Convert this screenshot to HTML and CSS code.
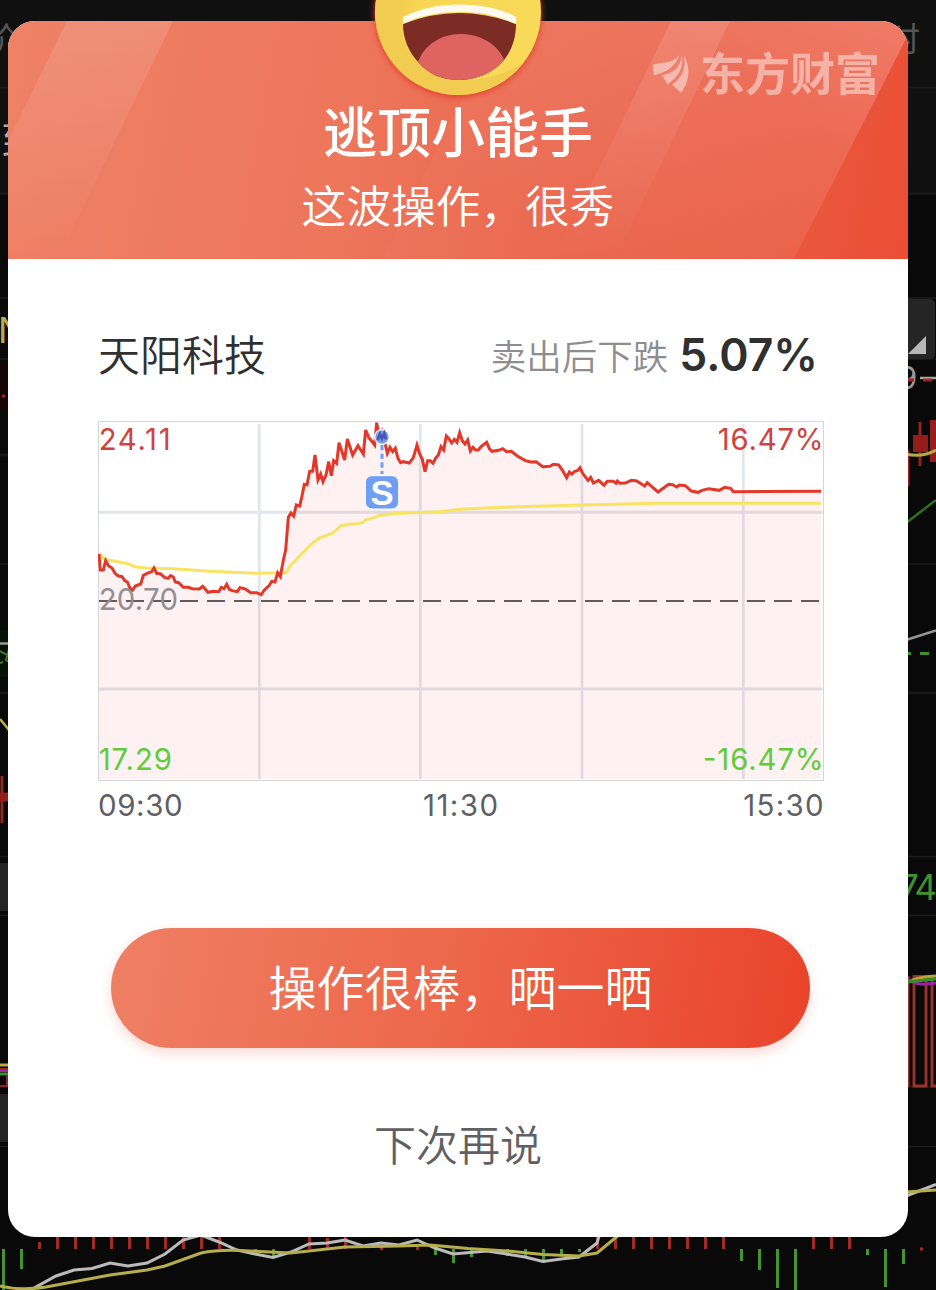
FILE: index.html
```html
<!DOCTYPE html>
<html lang="zh-CN">
<head>
<meta charset="utf-8">
<title>逃顶小能手</title>
<link rel="stylesheet" href="styles.css">
</head>
<body>
<svg class="backdrop" viewBox="0 0 936 1290" aria-hidden="true">
  <rect width="936" height="1290" fill="#090909"/>
  <rect width="936" height="193" fill="#101010"/>
  <g stroke="#1c1c1c" stroke-width="1.5">
    <path d="M0 87.500H936M0 298H936M0 359H936M0 564H936M0 856.500H936M0 915.500H936M0 1087H936M0 1146.500H936"/>
    <path d="M0 193.500H936M0 455H936M0 693H936" stroke-width="3" stroke="#171717"/>
  </g>
  <g class="backdrop-cjk">
    <text x="-14" y="51" font-size="33" fill="#555">价</text>
    <text x="887" y="51" font-size="33" fill="#555">时</text>
    <text x="1" y="154" font-size="38" fill="#aaa">到</text>
  </g>
  <rect x="0" y="363" width="9" height="47" fill="#160304"/>
  <circle cx="3.500" cy="396" r="1.700" fill="#a02622"/>
  <text x="-2" y="343" class="digits" font-size="35" fill="#b5ad4b">N</text>
  <rect x="0" y="630" width="9" height="47" fill="#071207"/>
  <path d="M0 643.500H9" stroke="#999" stroke-width="2.500"/>
  <path d="M0 651L9 656M0 663L3 662M9 649L6 660L9 662" stroke="#398025" stroke-width="2" fill="none"/>
  <path d="M0 719L9 730" stroke="#bbb04a" stroke-width="2.500"/>
  <path d="M2 776V823" stroke="#8b2621" stroke-width="3"/>
  <path d="M0 797H9" stroke="#951d19" stroke-width="9"/>
  <path d="M0 863H9V911H0ZM0 1094H9V1142H0Z" fill="#242424"/>
  <g stroke-width="3">
    <path d="M0 1065H9" stroke="#b5aa48"/>
    <path d="M0 1069H9" stroke="#9b2825" stroke-width="2"/>
    <path d="M0 1071H9" stroke="#a124a2" stroke-width="2"/>
    <path d="M0 1074H9" stroke="#438d2c"/>
    <path d="M7 1075V1086H0" stroke="#8b2723" fill="none" stroke-width="2"/>
  </g>
  <rect x="885" y="299" width="50" height="60" rx="5" fill="#252525"/>
  <path d="M908 354L926 336V354Z" fill="#b8b8b8"/>
  <text x="898" y="389" class="digits" font-size="31" fill="#999">9</text>
  <path d="M920 378H936" stroke="#aaa" stroke-width="2.500"/>
  <path d="M908 380H914M923 380H932" stroke="#a52321" stroke-width="3"/>
  <path d="M908 450V486M920 422V466" stroke="#902320" stroke-width="3"/>
  <path d="M913 435H928V452H913ZM930 420H936V462H930Z" fill="#951d19"/>
  <path d="M906 454Q922 458 936 450" stroke="#b9aa48" stroke-width="3" fill="none"/>
  <path d="M906 523L936 500" stroke="#31701f" stroke-width="2.500"/>
  <path d="M906 640L936 630.500" stroke="#949494" stroke-width="2.500"/>
  <path d="M906 653.500H911M920 653.500H929" stroke="#438f2b" stroke-width="3"/>
  <text x="899" y="900" class="digits" font-size="35" fill="#429130" textLength="38">74</text>
  <g fill="none" stroke="#98302c" stroke-width="3">
    <path d="M908 976V1087M914 976.500H926V1086H914ZM932 976V1086H936"/>
    <path d="M906 983Q916 977 936 976" stroke="#b5a63b"/>
    <path d="M906 977Q914 987 936 983" stroke="#9d20aa"/>
    <path d="M906 982L936 979" stroke="#359126"/>
  </g>
  <path d="M39.500 1242V1249" stroke="#a22b27" stroke-width="3"/>
  <path d="M57.500 1236V1249M75.500 1236V1249M93.500 1236V1249M111.500 1236V1249M129.500 1236V1249M147.500 1236V1249M165.500 1236V1249M183.500 1236V1249M201.500 1236V1249M219.500 1236V1249M309.500 1236V1249M327.500 1238V1249M345.500 1236V1249M381.500 1245V1250M417.500 1244V1250M597.500 1236V1249M615.500 1236V1249M633.500 1236V1249M651.500 1236V1249M669.500 1236V1249M687.500 1236V1249M705.500 1236V1249M723.500 1236V1249M813.500 1236V1249M831.500 1236V1249M849.500 1236V1249M920 1249H923" stroke="#a22b27" stroke-width="3"/>
  <path d="M3.500 1249V1290M21.500 1249V1269M255.500 1249V1252M273.500 1249V1256M435.500 1249V1255M453.500 1249V1263M471.500 1249V1257M507.500 1249V1256M525.500 1249V1256M543.500 1249V1263M561.500 1249V1255M579.500 1249V1252M741.500 1249V1261M759.500 1249V1270M777.500 1249V1288M795.500 1249V1290M867.500 1249V1255M885.500 1249V1287M903.500 1249V1264" stroke="#459430" stroke-width="3"/>
  <g fill="none" stroke-width="3">
    <path d="M34 1288L56 1276L74 1270L92 1268.500L110 1263L128 1266L147 1263L165 1254L183 1240L201 1235L219 1242L237 1250L255 1254L273 1257.500L291 1252L309 1244L327 1243L345 1240L363 1246L381 1243L399 1245L417 1240L435 1248L453 1254L487 1251L507 1254L525 1257L543 1261.500L561 1259L579 1257L597 1243L600 1233M906 1196L936 1184.500" stroke="#bbb"/>
    <path d="M0 1286Q20 1291 46 1287L110 1275L147 1270L165 1266L201 1253Q220 1249 250 1251L291 1253L345 1247L399 1246L430 1245L468 1248.500L507 1251L543 1254.500L579 1256L597 1253L620 1234M906 1192L936 1190" stroke="#b6ae4d"/>
  </g>
</svg>

<main class="dialog">
  <header class="banner">
    <svg class="banner-art" viewBox="0 0 900 238" aria-hidden="true">
      <defs>
        <linearGradient id="beam" x1="0" y1="0" x2="0" y2="1">
          <stop offset="0" stop-color="#fff" stop-opacity=".13"/>
          <stop offset="1" stop-color="#fff" stop-opacity="0"/>
        </linearGradient>
        <linearGradient id="wide" gradientUnits="userSpaceOnUse" x1="880" y1="0" x2="640" y2="300">
          <stop offset="0" stop-color="#fff" stop-opacity=".23"/>
          <stop offset=".35" stop-color="#fff" stop-opacity=".12"/>
          <stop offset="1" stop-color="#fff" stop-opacity=".02"/>
        </linearGradient>
      </defs>
      <path d="M59 0H165L50 238H0V120Z" fill="url(#beam)"/>
      <path d="M493 0H893L900 14L786 238H374Z" fill="url(#wide)"/>
      <path d="M663 0H722L607 238H547Z" fill="url(#beam)"/>
    </svg>
    <svg class="emoji" viewBox="0 0 186 112" aria-hidden="true">
      <defs>
        <linearGradient id="face" x1="0" x2="1">
          <stop offset=".1" stop-color="#f2c84d"/>
          <stop offset=".25" stop-color="#f7d653"/>
          <stop offset="1" stop-color="#f9da59"/>
        </linearGradient>
      </defs>
      <circle class="face" cx="93" cy="12" r="83" fill="url(#face)"/>
      <path d="M10 12A83 83 0 0 0 158 63Q132 80 98 80C59 80 31 53 30 0H11Z" fill="#f2cc50"/>
      <path d="M38 24Q94 2 151 24C151 38 147 50 139 60C127 74 110 80 94 80C79 80 64 75 53 62C43 51 38 38 38 24Z" fill="#7c2b25"/>
      <path d="M53 62C59 45 76 34 95 34C115 34 133 44 139 60C127 74 110 80 94 80C79 80 64 75 53 62Z" fill="#df6461"/>
      <path d="M38 17C56 8 75 4.500 94 4.500C114 4.500 135 8 151 17V24C132 15 114 12 94 12C75 12 56 15 38 24Z" fill="#fffaf0"/>
    </svg>
    <div class="brand">
      <svg class="brand-mark" viewBox="0 0 112 120" aria-hidden="true">
        <path d="M80 2C66 26 34 24 0 32L2 64C40 56 68 38 80 2Z"/>
        <path d="M87 4C82 44 62 56 28 64L44 92C76 68 94 44 87 4Z"/>
        <path d="M93 4C102 46 84 74 58 92L84 117C112 84 114 36 93 4Z"/>
      </svg>
      <span class="brand-name">东方财富</span>
    </div>
    <h1 class="title">逃顶小能手</h1>
    <p class="subtitle">这波操作，很秀</p>
  </header>

  <section class="stock">
    <div class="stock-head">
      <h2 class="stock-name">天阳科技</h2>
      <p class="change"><span class="change-label">卖出后下跌</span><strong class="change-value">5.07%</strong></p>
    </div>
    <svg class="chart" viewBox="24 33 2178 1080">
      <g fill="none" stroke="#e3e5ec">
        <path d="M24 307H2200M24 837H2200" stroke-width="9"/>
        <path d="M508 42V1107M991 42V1107M1476 42V1107M1960 42V1107" stroke-width="8"/>
      </g>
      <rect x="25.500" y="34.500" width="2175" height="1077" fill="none" stroke="#d2d6da" stroke-width="3"/>
      <path id="area" fill="#e03030" fill-opacity=".065"/>
      <path d="M27 573H2195" stroke="#625a5b" stroke-width="6" stroke-dasharray="54 27"/>
      <path class="average" d="M27 430L42 446L60 451L114 461L135 470L165 474L250 476L360 484L500 490L588 488L602 466L620 448L636 430L648 420L658 408L672 396L690 383L725 371L739 360L752 348L775 343L800 341L818 338L828 329L847 325L865 317L900 312L950 309L1050 305L1120 297L1260 291L1450 286L1700 280H2193"/>
      <path id="price" class="price"/>
      <g class="digits chart-values">
        <text x="26" y="120" textLength="216" fill="#cf423e">24.11</text>
        <text x="26" y="600" textLength="238" fill="#929094">20.70</text>
        <text x="26" y="1080" textLength="220" fill="#60cb3b">17.29</text>
        <text x="1883" y="120" textLength="318" fill="#cf423e">16.47%</text>
        <text x="1839" y="1080" textLength="362" fill="#60cb3b">-16.47%</text>
      </g>
      <circle cx="876" cy="81" r="22" fill="#719ff1" stroke="#fff" stroke-width="4"/>
      <path d="M863 90L870 72L876 86L883 70L888 88" fill="none" stroke="#4d54ae" stroke-width="8"/>
      <path d="M876 105V192" stroke="#719ff1" stroke-width="9" stroke-dasharray="16 10"/>
      <rect x="826" y="197" width="100" height="100" rx="20" fill="#6f9ef2" stroke="#fff" stroke-width="3"/>
      <text class="sell" x="876" y="285" text-anchor="middle">S</text>
    </svg>
    <div class="times"><span>09:30</span><span class="noon">11:30</span><span class="close">15:30</span></div>
  </section>

  <div class="actions">
    <button class="share">操作很棒，晒一晒</button>
    <button class="later">下次再说</button>
  </div>
</main>
<script src="chart.js"></script>
</body>
</html>
```
FILE: chart.js
```js
// Price samples by trading session segment: horizontal offset, then x y pairs.
const segments = [
  [0, "27,432 31,480 40,480 47,452 56,468 66,474 75,490 85,498 96,500 104,512 112,516 120,534 128,540 136,528 152,522 160,496 176,488 184,486 192,474 200,490 212,492 224,502 234,505 242,497 250,501 256,516 266,518 280,532 295,532 307,536 328,537 338,529 354,547 370,544 386,545 394,532 402,536 410,523 418,538 426,542 442,545 450,533 466,537 482,548 500,548 514,554 522,541 538,526 545,514 555,516 563,488 571,500 580,450 587,420 595,322 603,309 611,318 619,285 629,288 635,262 643,223 651,225 659,184 668,184"],
  [690, "-15,135 -6,210 2,192 9,215 18,195 26,155 34,197 41,152 50,160 57,98 74,150 82,87 98,135 114,107 130,132 137,60 146,82 164,105 170,38 178,85 186,65 194,95 202,130 210,112 218,125 226,115 234,145 242,158 250,155 268,159 280,143 291,105 299,132 307,148 315,185 323,152 331,152 339,160 347,144 355,135 363,110 371,120 379,78 387,87 395,99 403,88 411,97 419,68 427,92 435,102 443,90 451,123 459,112 467,120 475,120 483,110 500,97 508,116 516,124 536,121 548,116 560,125 574,124 592,138 616,152 632,156 648,155 668,170 690,169 700,163 716,165 728,182 740,203 748,186"],
  [1440, "6,192 14,184 22,182 30,173 38,190 54,211 62,202 70,219 86,211 102,226 112,214 130,214 138,220 142,213 150,220 166,219 184,211 200,213 224,228 232,218 248,232 264,246 296,223 308,224 320,231 328,225 346,227 364,243 384,247 396,241 416,236 448,241 464,232 482,235 490,245 753,244"]
];

const line = "M" + segments.flatMap(([dx, list]) =>
  list.split(" ").map(pair => {
    const [x, y] = pair.split(",").map(Number);
    return `${x + dx} ${y}`;
  })
).join("L");

document.getElementById("price").setAttribute("d", line);
document.getElementById("area").setAttribute("d", `${line}V1107H27Z`);
```
FILE: styles.css
```css
* { box-sizing: border-box; margin: 0; padding: 0; }

body {
  width: 936px;
  height: 1290px;
  overflow: hidden;
  padding: 21px 28px 53px 8px;
  background: #090909;
  font-family: Inter, "Noto Sans CJK SC", sans-serif;
}

.backdrop { position: absolute; left: 0; top: 0; width: 936px; height: 1290px; }
.backdrop-cjk { font-family: "Noto Sans CJK SC", sans-serif; }
.digits { font-family: Inter, sans-serif; }

.dialog {
  position: relative;
  display: flex;
  flex-direction: column;
  width: 900px;
  height: 1216px;
  border-radius: 27px;
  background: #fff;
}

.banner {
  position: relative;
  display: flex;
  flex-direction: column;
  align-items: center;
  height: 238px;
  padding-top: 74px;
  border-radius: 27px 27px 0 0;
  background: linear-gradient(100deg, #ee8166 0%, #ed765b 38%, #ea644b 65%, #ea4f35 100%);
  color: #fff;
}

.banner-art { position: absolute; inset: 0; width: 900px; height: 238px; border-radius: inherit; }
.emoji { position: absolute; left: 357px; top: -21px; width: 186px; height: 112px; }
.face { filter: drop-shadow(0 2px 3px #e2402c); }

.brand {
  position: absolute;
  left: 645px;
  top: 29px;
  display: flex;
  align-items: center;
  gap: 10px;
  opacity: .46;
}
.brand-mark { width: 37px; height: 40px; margin-top: 3px; fill: #fff; }
.brand-name { font: 700 45px/44px "Noto Sans CJK SC", sans-serif; }

.title, .subtitle { position: relative; font-family: "Noto Sans CJK SC", sans-serif; }
.title { font-size: 54px; line-height: 70px; font-weight: 500; }
.subtitle { margin-top: 6px; font-size: 44.700px; line-height: 66px; font-weight: 350; }

.stock { padding: 63px 84px 0 90px; }
.stock-head { display: flex; justify-content: space-between; align-items: center; height: 64px; padding-right: 6px; }
.stock-name { font: 350 42px/62px "Noto Sans CJK SC", sans-serif; height: 64px; color: #303030; }
.change { display: flex; align-items: center; gap: 11px; }
.change-label { padding-top: 2px; font: 350 35.500px/64px "Noto Sans CJK SC", sans-serif; color: #8e8d91; }
.change-value { padding-top: 2px; font-size: 44.500px; line-height: 64px; font-weight: 600; color: #303030; }

.chart { display: block; width: 726px; height: 360px; margin-top: 35px; }
.chart-values { font-size: 88px; }
.price { fill: none; stroke: #e33829; stroke-width: 9; }
.average { fill: none; stroke: #f7e463; stroke-width: 9; }
.sell { font: 700 104px "Liberation Sans", sans-serif; fill: #fff; }

.times { display: flex; justify-content: space-between; font-size: 29.500px; letter-spacing: .6px; line-height: 48px; color: #606064; }
.noon { margin-right: 4px; letter-spacing: 1.400px; }
.close { letter-spacing: 1.300px; margin-right: -1px; }

.actions { display: flex; flex-direction: column; align-items: center; padding-top: 99px; }
button { border: 0; font-family: "Noto Sans CJK SC", sans-serif; font-weight: 350; }
.share {
  width: 699px;
  height: 120px;
  margin-left: 5px;
  padding-bottom: 6px;
  border-radius: 60px;
  background: linear-gradient(100deg, #ef8064, #ed674b 48%, #e9432b);
  box-shadow: 0 5px 12px #ea4d3538;
  color: #fff;
  font-size: 48px;
}
.later { margin-top: 65px; background: none; color: #606064; font-size: 42px; line-height: 60px; }
```
